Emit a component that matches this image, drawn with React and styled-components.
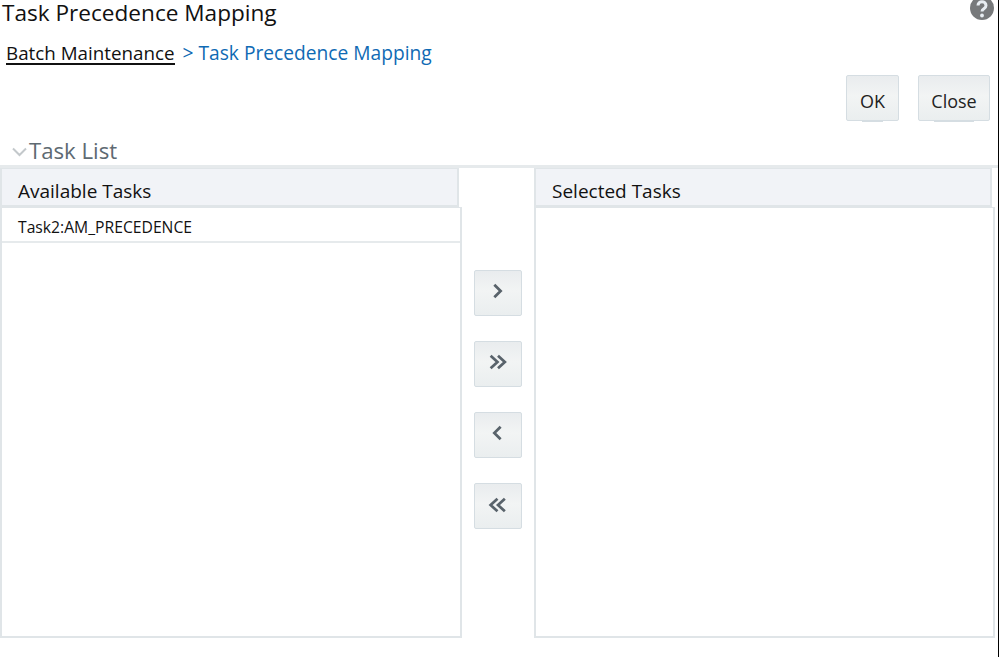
import React from "react";
import styled, { createGlobalStyle } from "styled-components";

const GlobalStyle = createGlobalStyle`
  html, body {
    margin: 0;
    padding: 0;
    background: #fff;
  }
  body {
    font-family: "Open Sans", "Noto Sans", sans-serif;
    color: #111;
  }
`;

const Page = styled.div`
  width: 998px;
  height: 657px;
  border-right: 1px solid #000;
  overflow: hidden;
`;

const TitleBar = styled.div`
  display: flex;
  justify-content: space-between;
  height: 26px;
  padding: 0 4px 0 2px;
`;

const Title = styled.h1`
  margin: 0;
  font-size: 22.6px;
  line-height: 26px;
  font-weight: 400;
  color: #111;
`;

const HelpIcon = styled.svg`
  width: 24px;
  height: 24px;
  margin-top: -4px;
`;

const Breadcrumb = styled.div`
  display: flex;
  gap: 8px;
  height: 26px;
  margin-top: 14px;
  padding-left: 6px;
  font-size: 19.2px;
  line-height: 26px;
`;

const CrumbLink = styled.a`
  color: #111;
  font-size: 18.8px;
  border-bottom: 2px solid #111;
  height: 23px;
`;

const CrumbCurrent = styled.span`
  color: #0f6ab4;
`;

const Actions = styled.div`
  display: flex;
  justify-content: flex-end;
  gap: 19px;
  margin-top: 9px;
  padding-right: 8px;
`;

const Button = styled.button`
  position: relative;
  width: ${(p) => p.$width}px;
  height: 46px;
  padding: 6px 0 0;
  border: 1px solid #d5dde2;
  border-radius: 2px;
  background: linear-gradient(#e9ecee, #f2f4f4 45%, #eaeeef);
  font-family: inherit;
  font-size: 18px;
  color: #222;

  &::after {
    content: "";
    position: absolute;
    left: 15px;
    right: 15px;
    bottom: -2px;
    height: 1px;
    background: #d5dde2;
  }
`;

const SectionHeader = styled.div`
  display: flex;
  align-items: center;
  gap: 2px;
  height: 28px;
  margin-top: 16px;
  padding-left: 12px;
  border-bottom: 3px solid #e6eaec;
  font-size: 22.2px;
  line-height: 28px;
  color: #5e6a72;
`;

const Columns = styled.div`
  display: grid;
  grid-template-columns: 462px 72px 461px;
`;

const Column = styled.div`
  display: flex;
  flex-direction: column;
  min-width: 0;
`;

const ColumnHeader = styled.div`
  box-sizing: border-box;
  width: ${(p) => p.$width}px;
  height: 39px;
  padding: 9px 0 0 16px;
  background: #f1f3f7;
  border: 2px solid #e0e5e8;
  border-top-width: 1px;
  font-size: 19px;
  line-height: 26px;
  color: #111;
`;

const ListBox = styled.div`
  box-sizing: border-box;
  height: 431px;
  border: 2px solid #e0e5e8;
  border-top-width: 1px;
`;

const ListRow = styled.div`
  height: 33px;
  padding-left: 16px;
  border-bottom: 2px solid #e6eaec;
  font-size: 15.7px;
  line-height: 38px;
  color: #111;
`;

const MoveButtons = styled.div`
  display: flex;
  flex-direction: column;
  gap: 25px;
  padding: 102px 0 0 12px;
`;

const MoveButton = styled.button`
  display: flex;
  align-items: center;
  justify-content: center;
  width: 48px;
  height: 46px;
  padding: 0 0 ${(p) => p.$lift}px;
  border: 1px solid #d5dde2;
  border-radius: 2px;
  background: linear-gradient(#e9ecee, #f2f4f4 45%, #eaeeef);
  color: #59636b;
`;

const chevrons = {
  right: ["M6 3.5l6 6-6 6"],
  doubleRight: ["M2.5 3.5l6.5 6-6.5 6", "M9.5 3.5l6.5 6-6.5 6"],
  left: ["M12 3.5l-6 6 6 6"],
  doubleLeft: ["M9 3.5l-6.5 6 6.5 6", "M16 3.5l-6.5 6 6.5 6"],
};

const Chevron = ({ kind }) => (
  <svg width="20" height="20" viewBox="0 0 19 19" fill="none" stroke="currentColor" strokeWidth="2.6">
    {chevrons[kind].map((d) => (
      <path key={d} d={d} />
    ))}
  </svg>
);

const moves = [
  { kind: "right", lift: 5 },
  { kind: "doubleRight", lift: 5 },
  { kind: "left", lift: 5 },
  { kind: "doubleLeft", lift: 3 },
];

export default function App() {
  return (
    <Page>
      <GlobalStyle />
      <TitleBar>
        <Title>Task Precedence Mapping</Title>
        <HelpIcon viewBox="0 0 24 24">
          <circle cx="12" cy="12" r="12" fill="#77797b" />
          <path d="M8 9.5c0-5 8-5 8 0 0 3.5-4 3-4 6" fill="none" stroke="#e8edf2" strokeWidth="3" />
          <circle cx="12" cy="19.5" r="1.9" fill="#e8edf2" />
        </HelpIcon>
      </TitleBar>
      <Breadcrumb>
        <CrumbLink>Batch Maintenance</CrumbLink>
        <CrumbCurrent>&gt; Task Precedence Mapping</CrumbCurrent>
      </Breadcrumb>
      <Actions>
        <Button $width={53}>OK</Button>
        <Button $width={72}>Close</Button>
      </Actions>
      <SectionHeader>
        <svg width="15" height="15" viewBox="0 0 15 15" fill="none" stroke="#c3c8cb" strokeWidth="2">
          <path d="M1 4.5l6.5 6.5 6.5-6.5" />
        </svg>
        Task List
      </SectionHeader>
      <Columns>
        <Column>
          <ColumnHeader $width={459}>Available Tasks</ColumnHeader>
          <ListBox>
            <ListRow>Task2:AM_PRECEDENCE</ListRow>
          </ListBox>
        </Column>
        <MoveButtons>
          {moves.map(({ kind, lift }) => (
            <MoveButton key={kind} $lift={lift}>
              <Chevron kind={kind} />
            </MoveButton>
          ))}
        </MoveButtons>
        <Column>
          <ColumnHeader $width={458}>Selected Tasks</ColumnHeader>
          <ListBox />
        </Column>
      </Columns>
    </Page>
  );
}
